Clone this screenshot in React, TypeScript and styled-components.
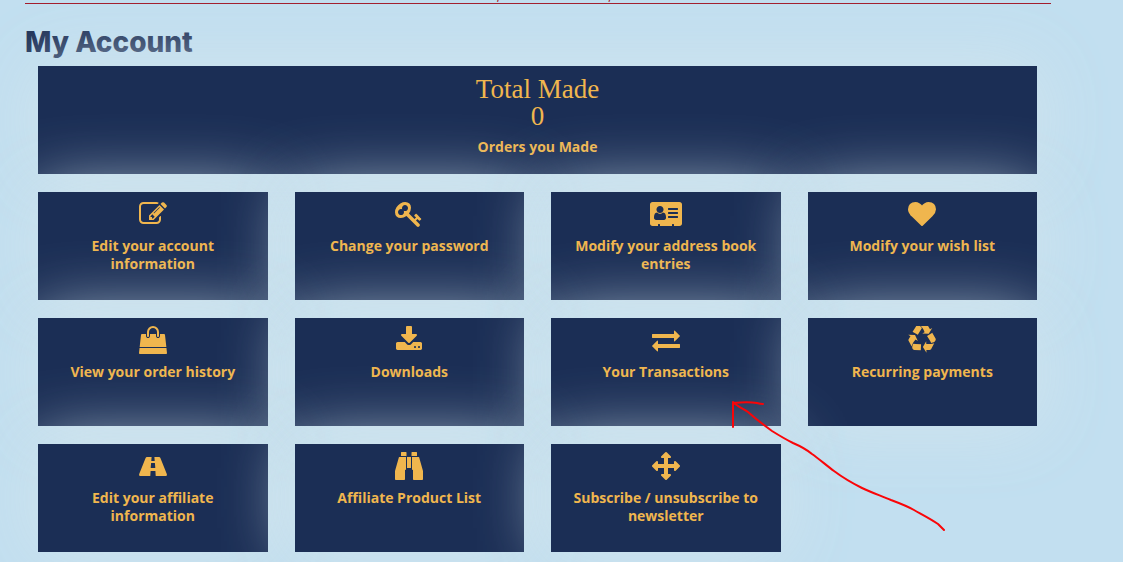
import React from "react";
import styled, { createGlobalStyle } from "styled-components";

const GlobalStyle = createGlobalStyle`
  *, *::before, *::after { box-sizing: border-box; }
  html { background: #c2dff0; }
  body { margin: 0; font-family: "Open Sans", "Noto Sans", sans-serif; overflow: hidden; }
`;

const Page = styled.div`
  position: relative;
  padding: 0 72px 10px 25px;
`;

const ContactBar = styled.header`
  display: flex;
  flex-direction: column;
  align-items: center;
  justify-content: flex-end;
  height: 4px;
  overflow: hidden;
  border-bottom: 1px solid #a31b2b;
`;

const ContactLine = styled.div`
  display: flex;
  justify-content: center;
  align-items: flex-end;
  gap: 108px;
  height: 3px;
  margin-right: -32px;
  font-size: 14px;
  line-height: 16px;
  color: #a31b2b;
`;

const Title = styled.h1`
  margin: 0;
  padding: 20px 0 6px;
  font-family: Inter, "Open Sans", sans-serif;
  font-weight: 800;
  font-size: 28px;
  line-height: 36px;
  color: #1b2e55;
`;

const Grid = styled.section`
  display: grid;
  grid-template-columns: repeat(4, minmax(0, 1fr));
  gap: 18px 27px;
  padding: 0 14px 0 13px;
`;

const Card = styled.a`
  display: flex;
  flex-direction: column;
  align-items: center;
  gap: 9px;
  min-height: 108px;
  padding: 8px 16px;
  background: #1b2e55;
  box-shadow: 0 0 70px rgba(211, 228, 236, 0.9);
  color: #f0b64e;
  text-align: center;
  text-decoration: none;
`;

const Summary = styled(Card)`
  grid-column: 1 / -1;
  gap: 8px;
  padding-top: 10px;
`;

const Total = styled.p`
  margin: 0;
  font-family: "Liberation Serif", "Times New Roman", serif;
  font-size: 27px;
  line-height: 27px;
`;

const Label = styled.span`
  font-weight: 700;
  font-size: 14px;
  line-height: 18px;
`;

const Icon = styled.svg`
  display: block;
  flex: none;
  height: 28px;
  fill: currentColor;
`;

const Annotation = styled.svg`
  position: absolute;
  left: 720px;
  top: 390px;
  z-index: 2;
  fill: none;
  stroke: #fa0508;
  stroke-width: 2;
  stroke-linecap: round;
  stroke-linejoin: round;
  pointer-events: none;
`;

type Glyph = { path: string; box?: string; width?: number };

const glyphs: Record<string, Glyph> = {
  edit: {
    path: "M888 1184l116-116-152-152-116 116v56h96v96h56zm440-720q-16-16-33 1l-350 350q-17 17-1 33t33-1l350-350q17-17 1-33zm80 594v190q0 119-84.5 203.5t-203.5 84.5h-832q-119 0-203.5-84.5t-84.5-203.5v-832q0-119 84.5-203.5t203.5-84.5h832q63 0 117 25 15 7 18 23 3 17-9 29l-49 49q-14 14-32 8-23-6-45-6h-832q-66 0-113 47t-47 113v832q0 66 47 113t113 47h832q66 0 113-47t47-113v-126q0-13 9-22l64-64q15-15 35-7t20 29zm-96-738l288 288-672 672h-288v-288zm444 132l-92 92-288-288 92-92q28-28 68-28t68 28l152 152q28 28 28 68t-28 68z",
  },
  key: {
    path: "M832 512q0-80-56-136t-136-56-136 56-56 136q0 42 19 83-41-19-83-19-80 0-136 56t-56 136 56 136 136 56 136-56 56-136q0-42-19-83 41 19 83 19 80 0 136-56t56-136zm851 704q0 17-49 66t-66 49q-9 0-28.5-16t-36.5-33-38.5-40-24.5-26l-96 96 220 220q28 28 28 68 0 42-39 81t-81 39q-40 0-68-28l-671-671q-176 131-365 131-163 0-265.5-102.5t-102.5-265.5q0-160 95-313t248-248 313-95q163 0 265.5 102.5t102.5 265.5q0 189-131 365l355 355 96-96q-3-3-26-24.5t-40-38.5-33-36.5-16-28.5q0-17 49-66t66-49q13 0 23 10 6 6 46 44.5t82 79.5 86.5 86 73 78 28.5 41z",
  },
  card: {
    box: "0 0 2048 1792",
    width: 32,
    path: "M1024 1131q0-64-9-117.5t-29.5-103-60.5-78-97-28.5q-6 4-30 18t-37.5 21.5-35.5 17.5-43 14.5-42 4.5-42-4.5-43-14.5-35.5-17.5-37.5-21.5-30-18q-57 0-97 28.5t-60.5 78-29.5 103-9 117.5 37 106.5 91 42.5h512q54 0 91-42.5t37-106.5zm-157-520q0-94-66.5-160.5t-160.5-66.5-160.5 66.5-66.5 160.5 66.5 160.5 160.5 66.5 160.5-66.5 66.5-160.5zm925 509v-64q0-14-9-23t-23-9h-576q-14 0-23 9t-9 23v64q0 14 9 23t23 9h576q14 0 23-9t9-23zm0-260v-56q0-15-10.5-25.5t-25.5-10.5h-568q-15 0-25.5 10.5t-10.5 25.5v56q0 15 10.5 25.5t25.5 10.5h568q15 0 25.5-10.5t10.5-25.5zm0-252v-64q0-14-9-23t-23-9h-576q-14 0-23 9t-9 23v64q0 14 9 23t23 9h576q14 0 23-9t9-23zm256-320v1216q0 66-47 113t-113 47h-352v-96q0-14-9-23t-23-9h-64q-14 0-23 9t-9 23v96h-768v-96q0-14-9-23t-23-9h-64q-14 0-23 9t-9 23v96h-352q-66 0-113-47t-47-113v-1216q0-66 47-113t113-47h1728q66 0 113 47t47 113z",
  },
  heart: {
    path: "M896 1664q-26 0-44-18l-624-602q-10-8-27.5-26t-55.5-65.5-68-97.5-53.5-121-23.5-138q0-220 127-344t351-124q62 0 126.5 21.5t120 58 95.5 68.5 76 68q36-36 76-68t95.5-68.5 120-58 126.5-21.5q224 0 351 124t127 344q0 221-229 450l-623 600q-18 18-44 18z",
  },
  bag: {
    path: "M1757 1408l35 313q3 28-16 50-19 21-48 21h-1664q-29 0-48-21-19-22-16-50l35-313h1722zm-93-839l86 775h-1708l86-775q3-24 21-40.5t43-16.5h256v128q0 53 37.5 90.5t90.5 37.5 90.5-37.5 37.5-90.5v-128h384v128q0 53 37.5 90.5t90.5 37.5 90.5-37.5 37.5-90.5v-128h256q25 0 43 16.5t21 40.5zm-384-185v256q0 26-19 45t-45 19-45-19-19-45v-256q0-106-75-181t-181-75-181 75-75 181v256q0 26-19 45t-45 19-45-19-19-45v-256q0-159 112.5-271.5t271.5-112.5 271.5 112.5 112.5 271.5z",
  },
  download: {
    path: "M1344 1344q0-26-19-45t-45-19-45 19-19 45 19 45 45 19 45-19 19-45zm256 0q0-26-19-45t-45-19-45 19-19 45 19 45 45 19 45-19 19-45zm128-224v320q0 40-28 68t-68 28h-1472q-40 0-68-28t-28-68v-320q0-40 28-68t68-28h465l135 136q58 56 136 56t136-56l136-136h464q40 0 68 28t28 68zm-325-569q17 41-14 70l-448 448q-18 19-45 19t-45-19l-448-448q-31-29-14-70 17-39 59-39h256v-448q0-26 19-45t45-19h256q26 0 45 19t19 45v448h256q42 0 59 39z",
  },
  exchange: {
    path: "M1792 1184v192q0 13-9.5 22.5t-22.5 9.5h-1376v192q0 13-9.5 22.5t-22.5 9.5q-12 0-24-10l-319-320q-9-9-9-22 0-14 9-23l320-320q9-9 23-9 13 0 22.5 9.5t9.5 22.5v192h1376q13 0 22.5 9.5t9.5 22.5zm0-544q0 14-9 23l-320 320q-9 9-23 9-13 0-22.5-9.5t-9.5-22.5v-192h-1376q-13 0-22.5-9.5t-9.5-22.5v-192q0-13 9.5-22.5t22.5-9.5h1376v-192q0-14 9-23t23-9q12 0 24 10l319 319q9 9 9 23z",
  },
  recycle: {
    path: "M836 1169l-15 368-2 22-420-29q-36-3-67-31.5t-47-65.5q-11-27-14.5-55t4-65 12-55 21.5-64 19-53q78 12 509 28zm-387-586l180 379-147-92q-63 72-111.5 144.5t-72.5 125-39.5 94.5-18.5 63l-4 21-190-357q-17-26-18-56t6-47l8-18q35-63 114-188l-140-86zm1231 517l-188 359q-12 29-36.5 46.5t-43.5 20.5l-18 4q-71 7-219 12l8 164-230-367 211-362 7 173q170 16 283 5t170-33zm-785-969q-47 63-265 435l-317-187-19-12 225-356q20-31 60-45t80-10q24 2 48.5 12t42 21 41.5 33.5 36 34.5 36 39.5 32 35zm655 307l212 363q18 37 12.5 76t-27.5 74q-13 20-33 37t-38 28-48.5 22-47 16-51.5 14-46 12q-34-72-265-436l313-195zm-143-226l142-83-220 373-419-20 151-86q-34-89-75-166t-75.5-123.5-64.5-80-47-46.5l-17-13 405 1q31-3 58 10.5t39 28.5l11 15q39 61 112 190z",
  },
  road: {
    box: "0 0 28 28",
    path: "M8 5H12.6L12.3 9H15.7L15.4 5H20Q21 5 21.4 6L27.8 22Q28.3 24 26.8 24H16.7L16.4 19H11.6L11.3 24H1.2Q-.3 24 .2 22L6.6 6Q7 5 8 5ZM12.1 11L11.7 15.5Q11.7 16 12.2 16H15.8Q16.3 16 16.3 15.5L15.9 11Z",
  },
  binoculars: {
    box: "0 128 1792 1792",
    path: "M704 448v768q0 26-19 45t-45 19v576q0 26-19 45t-45 19h-512q-26 0-45-19t-19-45v-512l249-873q7-23 31-23h424zm320 0v704h-256v-704h256zm768 896v512q0 26-19 45t-45 19h-512q-26 0-45-19t-19-45v-576q-26 0-45-19t-19-45v-768h424q24 0 31 23zm-1056-1184v224h-352v-224q0-14 9-23t23-9h288q14 0 23 9t9 23zm672 0v224h-352v-224q0-14 9-23t23-9h288q14 0 23 9t9 23z",
  },
  move: {
    path: "M1792 896q0 26-19 45l-256 256q-19 19-45 19t-45-19-19-45v-128h-384v384h128q26 0 45 19t19 45-19 45l-256 256q-19 19-45 19t-45-19l-256-256q-19-19-19-45t19-45 45-19h128v-384h-384v128q0 26-19 45t-45 19-45-19l-256-256q-19-19-19-45t19-45l256-256q19-19 45-19t45 19 19 45v128h384v-384h-128q-26 0-45-19t-19-45 19-45l256-256q19-19 45-19t45 19l256 256q19 19 19 45t-19 45-45 19h-128v384h384v-128q0-26 19-45t45-19 45 19l256 256q19 19 19 45z",
  },
};

const links = [
  { icon: "edit", label: "Edit your account information" },
  { icon: "key", label: "Change your password" },
  { icon: "card", label: "Modify your address book entries" },
  { icon: "heart", label: "Modify your wish list" },
  { icon: "bag", label: "View your order history" },
  { icon: "download", label: "Downloads" },
  { icon: "exchange", label: "Your Transactions" },
  { icon: "recycle", label: "Recurring payments" },
  { icon: "road", label: "Edit your affiliate information" },
  { icon: "binoculars", label: "Affiliate Product List" },
  { icon: "move", label: "Subscribe / unsubscribe to newsletter" },
];

function CardIcon({ name }: { name: string }) {
  const glyph = glyphs[name];
  return (
    <Icon viewBox={glyph.box ?? "0 0 1792 1792"} width={glyph.width ?? 28} aria-hidden>
      <path fillRule="evenodd" d={glyph.path} />
    </Icon>
  );
}

export default function App() {
  return (
    <Page>
      <GlobalStyle />
      <ContactBar>
        <ContactLine>
          <span>,</span>
          <span>,</span>
        </ContactLine>
      </ContactBar>
      <main>
        <Title>My Account</Title>
        <Grid>
          <Summary href="#orders">
            <Total>
              Total Made
              <br />0
            </Total>
            <Label>Orders you Made</Label>
          </Summary>
          {links.map(({ icon, label }) => (
            <Card key={icon} href={`#${icon}`}>
              <CardIcon name={icon} />
              <Label>{label}</Label>
            </Card>
          ))}
        </Grid>
      </main>
      <Annotation width="230" height="145" aria-hidden>
        <path d="M13 37V12C18 17 24 19 28 22C37 30 45 36 52 41C60 46 67 50 73 53C80 56 86 59 92 64C99 69 106 75 114 81C122 87 132 93 142 98C152 103 162 106 171 110C179 113 187 116 194 120C203 125 211 129 218 134L224 140" />
        <path d="M13 13C22 12 32 12 37 13Q40 14 43 14" />
      </Annotation>
    </Page>
  );
}
